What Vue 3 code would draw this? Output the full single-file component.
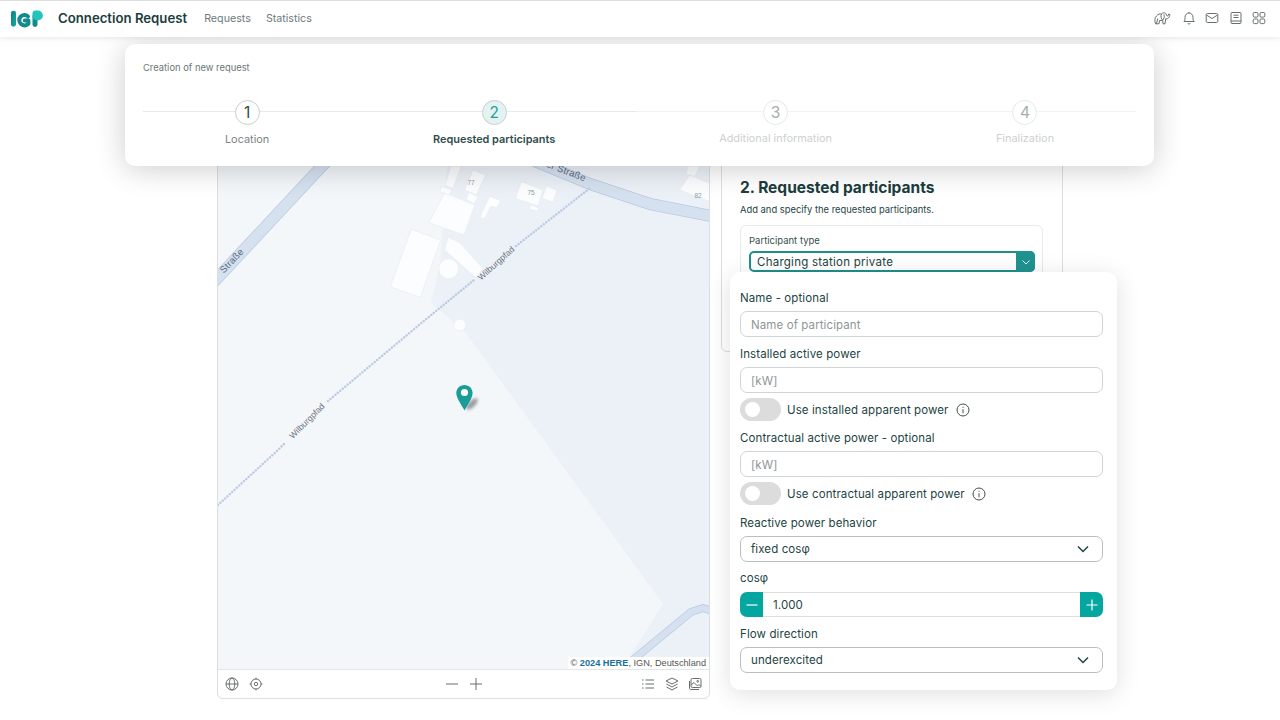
<script setup>
const steps = [
  { n: 1, label: 'Location', state: 'done' },
  { n: 2, label: 'Requested participants', state: 'active' },
  { n: 3, label: 'Additional information', state: 'todo' },
  { n: 4, label: 'Finalization', state: 'todo' }
]
const buildings = [
  '411.3,229.3 440.7,240 420.3,297.3 390.3,286.7',
  '448,237 459.7,242.7 483,268.3 476.3,278.3 444.7,250',
  '444.7,192.7 474.7,205 464,235 428.7,222.7',
  '451,166 461.3,166 453,188.3 444.7,185',
  '473,170 485.7,175 476.3,195 464.7,190',
  '441,186 452,190 449,195 440,192',
  '469,192 478,197 474,204 466,199',
  '489.7,196 500.7,200.7 497,208 491,206 484.7,219 480,217',
  '521.3,181.7 543,190 538,206 515.7,198.3',
  '546.3,186 557,190 553,202.3 542,198.3',
  '531,205 539,208 537,211 529,209',
  '689.7,175 710,183.3 710,201.7 679.7,190',
  '688,166 699.7,166 694.7,176.7 686,174'
]
</script>

<template>
  <div class="page">
    <header class="topbar">
      <svg class="logo" viewBox="0 0 32 18" width="32" height="18" aria-label="logo">
        <defs>
          <linearGradient id="lg" x1="0" y1="0" x2="1" y2="1">
            <stop offset="0" stop-color="#0f7f80" />
            <stop offset="1" stop-color="#16a8a4" />
          </linearGradient>
        </defs>
        <rect x="0" y="0.7" width="5" height="16" rx="2.4" fill="url(#lg)" />
        <path d="M17 6.4 A5.2 5.2 0 1 0 17.4 13.6 L17.4 10.6 L13.8 10.6" fill="none" stroke="#118c8b" stroke-width="4" stroke-linecap="round" stroke-linejoin="round" />
        <rect x="21.5" y="4" width="5" height="13" rx="2.4" fill="#118c8b" />
        <circle cx="26.8" cy="5.5" r="5.1" fill="#22c4bd" />
        <rect x="21.5" y="0.4" width="6" height="9" rx="3" fill="#22c4bd" />
      </svg>
      <span class="app-title">Connection Request</span>
      <nav class="nav">
        <a>Requests</a>
        <a>Statistics</a>
      </nav>
      <div class="top-icons">
        <svg viewBox="0 0 18 14" width="18" height="14" class="ic">
          <path d="M2.5 12.8 C1.5 10 1.5 6.5 3.5 5 C5 3.2 7 2.5 8.5 3 C10 1.2 13 1.5 13.5 4 C14 5.5 15 5.5 15.7 3 L16.9 3.5 C16.5 6.5 14.5 8.5 12.7 7.8 L12 12.8 L10 12.8 L9.7 9.5 L6.5 9.5 L6 12.8 Z" />
          <path d="M8.5 3 C7.5 5 8 8 9.7 9 C11 8 11.7 6 11 3.5 M4.8 7.5 L3.4 12.8" />
        </svg>
        <svg viewBox="0 0 14 14" width="14" height="14" class="ic">
          <path d="M2 10.5 C3 9.5 3 8.5 3 6.5 C3 3.8 4.8 2 7 2 C9.2 2 11 3.8 11 6.5 C11 8.5 11 9.5 12.2 10.5 Z M5.6 12.4 C6.2 13.1 7.8 13.1 8.4 12.4 M7 1 L7 2" />
        </svg>
        <svg viewBox="0 0 14 14" width="14" height="14" class="ic">
          <rect x="1.2" y="2.5" width="11.6" height="9" rx="1.2" />
          <path d="M1.5 4 L7 7.6 L12.5 4" />
        </svg>
        <svg viewBox="0 0 14 14" width="14" height="14" class="ic">
          <rect x="2" y="1.5" width="10" height="11" rx="1" />
          <path d="M4.5 4.2 H9.5 M4.5 6.5 H9.5 M2 10 H12" />
        </svg>
        <svg viewBox="0 0 14 14" width="14" height="14" class="ic">
          <rect x="1.2" y="1.5" width="4.8" height="4.6" rx="1.2" />
          <rect x="8" y="1.5" width="4.8" height="4.6" rx="1.2" />
          <rect x="1.2" y="8" width="4.8" height="4.6" rx="1.2" />
          <rect x="8" y="8" width="4.8" height="4.6" rx="1.2" />
        </svg>
      </div>
    </header>

    <main class="workspace">
      <section class="map-card">
        <div class="map">
          <svg class="tiles" viewBox="218 100 491 569" width="491" height="569">
            <rect x="218" y="100" width="492" height="569" fill="#f3f7fa" />
            <polygon points="431,303 440,262 452,100 710,100 710,669 622,669 663,604 465,332" fill="#ecf1f8" />
            <g fill="none" stroke-linejoin="round">
              <path d="M212,284 L322,166 L340,148" stroke="#b9c9e2" stroke-width="12" />
              <path d="M212,284 L322,166 L340,148" stroke="#d6e1f0" stroke-width="10.5" />
              <path d="M520,155 L590,184 L650,204 L716,217" stroke="#b9c9e2" stroke-width="12" />
              <path d="M520,155 L590,184 L650,204 L716,217" stroke="#d6e1f0" stroke-width="10.5" />
              <path d="M628,664 L691,612 L703,608 L716,612" stroke="#b9c9e2" stroke-width="8" />
              <path d="M628,664 L691,612 L703,608 L716,612" stroke="#d6e1f0" stroke-width="6.5" />
              <path d="M218,505 L278,450 L286,442 M328,401 L425,320 L474,280 M516,246 L590,188" stroke="#bccae2" stroke-width="2.4" stroke-dasharray="0.1 3.1" stroke-linecap="round" />
            </g>
            <g fill="#fcfdfe" stroke="#e6ecf1" stroke-width="0.7">
              <polygon v-for="b in buildings" :key="b" :points="b" />
              <circle cx="448.7" cy="268.7" r="10" />
              <circle cx="459.7" cy="325" r="6" />
            </g>
            <g class="road-label">
              <text transform="translate(234 263) rotate(-46)" text-anchor="middle">Straße</text>
              <text transform="translate(565 174) rotate(21)" text-anchor="middle">er Straße</text>
            </g>
            <g class="path-label">
              <text transform="translate(309 423) rotate(-45)" text-anchor="middle">Wilburgpfad</text>
              <text transform="translate(498 265.5) rotate(-42)" text-anchor="middle">Wilburgpfad</text>
            </g>
            <g class="house-no">
              <text x="471" y="185" text-anchor="middle">77</text>
              <text x="531" y="195" text-anchor="middle">75</text>
              <text x="698" y="198" text-anchor="middle">82</text>
            </g>
            <ellipse cx="472" cy="404" rx="7.5" ry="3.2" transform="rotate(-45 472 404)" fill="#444" opacity=".5" filter="blur(1.5px)" />
            <path d="M464.5 385 C460 385 456.3 388.6 456.3 393 C456.3 398 461.5 405 464.5 410.5 C467.5 405 472.6 398 472.6 393 C472.6 388.6 469 385 464.5 385 Z" fill="#1a9c98" />
            <circle cx="464.5" cy="392.5" r="3.6" fill="#fff" />
          </svg>
          <div class="attribution">© <b>2024 HERE</b>, IGN, Deutschland</div>
        </div>
        <div class="map-tools">
          <div class="tool-group">
            <svg viewBox="0 0 14 14" width="14" height="14" class="ic">
              <circle cx="7" cy="7" r="6" />
              <ellipse cx="7" cy="7" rx="2.8" ry="6" />
              <path d="M1 7 H13" />
            </svg>
            <svg viewBox="0 0 14 14" width="14" height="14" class="ic">
              <circle cx="7" cy="7" r="5" />
              <circle cx="7" cy="7" r="1.7" />
              <path d="M7 .5 V2 M7 12 V13.5 M.5 7 H2 M12 7 H13.5" />
            </svg>
          </div>
          <div class="tool-group zoom">
            <svg viewBox="0 0 14 14" width="14" height="14" class="ic"><path d="M1 7 H13" /></svg>
            <svg viewBox="0 0 14 14" width="14" height="14" class="ic"><path d="M1 7 H13 M7 1 V13" /></svg>
          </div>
          <div class="tool-group end">
            <svg viewBox="0 0 14 14" width="14" height="14" class="ic">
              <path d="M1 3 H2.5 M4.5 3 H13 M1 7 H2.5 M4.5 7 H13 M1 11 H2.5 M4.5 11 H13" />
            </svg>
            <svg viewBox="0 0 14 14" width="14" height="14" class="ic">
              <path d="M7 1 L13 4 L7 7 L1 4 Z M1.5 7 L7 10 L12.5 7 M1.5 10 L7 13 L12.5 10" />
            </svg>
            <svg viewBox="0 0 14 14" width="14" height="14" class="ic">
              <rect x="3" y="1.5" width="10" height="9" rx="1.3" />
              <path d="M1.5 4 V11 C1.5 12 2 12.5 3 12.5 H11 M3 8 L6 5.5 L9.5 9 L11 7.5 L13 9.5" />
              <circle cx="9.7" cy="4.3" r=".9" />
            </svg>
          </div>
        </div>
      </section>

      <aside class="side-panel">
        <h2>2. Requested participants</h2>
        <p class="sub">Add and specify the requested participants.</p>
        <div class="type-card">
          <div class="type-label">Participant type</div>
          <div class="type-select">
            <span>Charging station private</span>
            <i class="type-btn">
              <svg viewBox="0 0 10 10" width="10" height="10"><path d="M1.5 3.5 L5 7 L8.5 3.5" fill="none" stroke="#dff" stroke-width="1" /></svg>
            </i>
          </div>
        </div>
      </aside>
    </main>

    <section class="stepper-card">
      <div class="stepper-title">Creation of new request</div>
      <div class="steps">
        <div v-for="s in steps" :key="s.n" class="step" :class="s.state">
          <span class="circle">{{ s.n }}</span>
          <span class="step-label">{{ s.label }}</span>
        </div>
      </div>
    </section>

    <section class="form-card">
      <div class="field">
        <label>Name - optional</label>
        <div class="input placeholder">Name of participant</div>
      </div>
      <div class="field">
        <label>Installed active power</label>
        <div class="input placeholder">[kW]</div>
        <div class="toggle-row">
          <span class="toggle"><i></i></span>
          <span>Use installed apparent power</span>
          <svg class="info" viewBox="0 0 14 14" width="14" height="14"><circle cx="7" cy="7" r="6" /><path d="M7 6.2 V10.2 M7 3.8 V4.8" /></svg>
        </div>
      </div>
      <div class="field">
        <label>Contractual active power - optional</label>
        <div class="input placeholder">[kW]</div>
        <div class="toggle-row">
          <span class="toggle"><i></i></span>
          <span>Use contractual apparent power</span>
          <svg class="info" viewBox="0 0 14 14" width="14" height="14"><circle cx="7" cy="7" r="6" /><path d="M7 6.2 V10.2 M7 3.8 V4.8" /></svg>
        </div>
      </div>
      <div class="field gap-11">
        <label>Reactive power behavior</label>
        <div class="input select">
          <span>fixed cosφ</span>
          <svg viewBox="0 0 12 12" width="12" height="12"><path d="M1 3.5 L6 8.5 L11 3.5" fill="none" stroke="#1f4444" stroke-width="1.5" /></svg>
        </div>
      </div>
      <div class="field gap-9">
        <label class="num-label">cosφ</label>
        <div class="number">
          <button class="num-btn left"><svg viewBox="0 0 14 14" width="14" height="14"><path d="M1.5 7 H12.5" stroke="#fff" stroke-width="1.2" /></svg></button>
          <span class="num-value">1.000</span>
          <button class="num-btn right"><svg viewBox="0 0 14 14" width="14" height="14"><path d="M1.5 7 H12.5 M7 1.5 V12.5" stroke="#fff" stroke-width="1.2" /></svg></button>
        </div>
      </div>
      <div class="field">
        <label>Flow direction</label>
        <div class="input select">
          <span>underexcited</span>
          <svg viewBox="0 0 12 12" width="12" height="12"><path d="M1 3.5 L6 8.5 L11 3.5" fill="none" stroke="#1f4444" stroke-width="1.5" /></svg>
        </div>
      </div>
    </section>
  </div>
</template>

<style>
html, body { margin: 0; background: #fff; }
</style>

<style scoped>
.page {
  position: relative;
  width: 1280px;
  height: 720px;
  overflow: hidden;
  background: #fff;
  font-family: Inter, "Liberation Sans", sans-serif;
  color: #1d4444;
}
.topbar {
  position: relative;
  z-index: 1;
  box-sizing: border-box;
  height: 37px;
  display: flex;
  align-items: center;
  padding: 0 14px 2px 11px;
  background: #fff;
  border-top: 1px solid #dedede;
  box-shadow: 0 1px 6px rgba(0, 0, 0, 0.1);
}
.logo { flex: none; margin-top: 1px; }
.app-title {
  margin-left: 15px;
  font-size: 13.2px;
  font-weight: 600;
  color: #1b3d3d;
}
.nav {
  display: flex;
  gap: 15px;
  margin-left: 17px;
  font-size: 10.7px;
  color: #6d7b7b;
}
.top-icons {
  margin-left: auto;
  display: flex;
  align-items: center;
  gap: 9.5px;
}
.top-icons svg:first-child { margin-right: 1px; }
.ic {
  fill: none;
  stroke: #666e6e;
  stroke-width: 1;
  flex: none;
}
.workspace {
  display: flex;
  justify-content: center;
  gap: 11px;
  padding: 62px 0 0 0;
  align-items: flex-start;
}
.map-card {
  box-sizing: border-box;
  width: 493px;
  height: 600px;
  border: 1px solid #dcdfe0;
  border-radius: 6px;
  background: #fff;
  overflow: hidden;
  display: flex;
  flex-direction: column;
}
.map {
  position: relative;
  height: 569px;
  flex: none;
  border-bottom: 1px solid #e4e6e8;
}
.tiles { display: block; }
.road-label text { font: 9.5px "Liberation Sans", sans-serif; fill: #5a6a80; letter-spacing: .2px; }
.path-label text { font: 8.6px "Liberation Sans", sans-serif; fill: #6f7680; }
.house-no text { font: 6.5px "Liberation Sans", sans-serif; fill: #8aa0a8; }
.attribution {
  position: absolute;
  right: 0;
  bottom: 0;
  padding: 1px 3px 1px 3px;
  background: #fff;
  font: 9.2px "Liberation Sans", sans-serif;
  color: #555;
}
.attribution b { color: #1a6f9c; }
.map-tools {
  flex: 1;
  display: flex;
  align-items: center;
  padding: 0 7px;
}
.tool-group { flex: 1; display: flex; gap: 10px; }
.tool-group.zoom { justify-content: center; margin-left: 1px; }
.tool-group.end { justify-content: flex-end; gap: 9.5px; }
.side-panel {
  box-sizing: border-box;
  width: 342px;
  height: 253px;
  border: 1px solid #dcdfe0;
  border-radius: 6px;
  padding: 78px 19px 0 18px;
  background: #fff;
}
.side-panel h2 {
  margin: 0;
  font-size: 15.5px;
  line-height: 20px;
  font-weight: 700;
  color: #1b3d3d;
}
.sub {
  margin: 6px 0 0;
  font-size: 9.4px;
  line-height: 12px;
  color: #1d4444;
}
.type-card {
  margin-top: 9px;
  box-sizing: border-box;
  height: 100px;
  border: 1px solid #e8eaea;
  border-radius: 6px;
  padding: 9px 7px 9px 8px;
}
.type-label { font-size: 9.5px; line-height: 12px; color: #36504f; }
.type-select {
  margin-top: 4px;
  box-sizing: border-box;
  height: 21px;
  border: 2px solid #1f8f8c;
  border-radius: 5px;
  display: flex;
  align-items: center;
  justify-content: space-between;
  padding-left: 6px;
  font-size: 11.5px;
  letter-spacing: .25px;
}
.type-btn {
  width: 19px;
  height: 21px;
  margin-right: -2px;
  border-radius: 0 5px 5px 0;
  background: #1f9390;
  display: flex;
  align-items: center;
  justify-content: center;
}
.stepper-card {
  position: absolute;
  left: 125px;
  top: 44px;
  box-sizing: border-box;
  width: 1029px;
  height: 122px;
  background: #fff;
  border-radius: 10px;
  padding: 18px 18px 0;
  box-shadow: 0 3px 30px rgba(0, 0, 0, 0.2);
}
.stepper-title { font-size: 9.4px; line-height: 12px; color: #6b7777; }
.steps {
  display: flex;
  margin-top: 26px;
}
.step {
  flex: 1 1 auto;
  position: relative;
  display: flex;
  flex-direction: column;
  align-items: center;
  gap: 8px;
}
.step::before {
  content: "";
  position: absolute;
  left: 0;
  right: 0;
  top: 11px;
  height: 1px;
  background: #e8eaea;
}
.step.todo::before { background: #f2f3f3; }
.circle {
  position: relative;
  box-sizing: border-box;
  width: 25px;
  height: 25px;
  padding-bottom: 1px;
  border-radius: 50%;
  border: 1px solid #c9d0d0;
  background: #fff;
  display: flex;
  align-items: center;
  justify-content: center;
  font-size: 15.5px;
  color: #2f4c4c;
}
.step-label { font-size: 10.9px; line-height: 13px; color: #7b8585; white-space: nowrap; }
.active .circle { background: #e2f3f1; color: #2a9d98; }
.active .step-label { font-weight: 600; color: #304d4d; }
.todo .circle { border-color: #e6e8e8; color: #a5adad; }
.todo .step-label { color: #cdd1d1; margin-top: -1px; }
.form-card {
  position: absolute;
  left: 730px;
  top: 272px;
  box-sizing: border-box;
  width: 387px;
  height: 418px;
  padding: 19px 14px 0 10px;
  background: #fff;
  border-radius: 10px;
  box-shadow: 0 4px 24px rgba(0, 0, 0, 0.13);
  display: flex;
  flex-direction: column;
  gap: 10px;
  font-size: 11.5px;
  letter-spacing: .1px;
}
.field { display: flex; flex-direction: column; }
.gap-11 { margin-top: 1px; }
.gap-9 { margin-top: -1px; }
.field label {
  line-height: 14px;
  margin-bottom: 6px;
}
.field .num-label { margin-bottom: 7px; }
.input {
  box-sizing: border-box;
  height: 26px;
  border: 1px solid #cfd4d4;
  border-radius: 7px;
  padding: 0 10px;
  display: flex;
  align-items: center;
  justify-content: space-between;
}
.placeholder { color: #8f9696; padding-top: 1px; }
.select { border-color: #b9bfbf; }
.select svg { margin-right: 3px; }
.toggle-row {
  display: flex;
  align-items: center;
  margin-top: 5px;
  height: 23px;
}
.toggle {
  box-sizing: border-box;
  width: 41px;
  height: 23px;
  border-radius: 12px;
  background: #dcdcdc;
  padding: 4px 5px;
  margin-right: 6px;
}
.toggle i {
  display: block;
  width: 15px;
  height: 15px;
  border-radius: 50%;
  background: #fff;
}
.info {
  margin-left: 7px;
  fill: none;
  stroke: #444e4e;
  stroke-width: 1;
}
.number {
  height: 25px;
  display: flex;
  align-items: stretch;
}
.num-btn {
  width: 23px;
  border: 0;
  padding: 0;
  background: #04a7a0;
  display: flex;
  align-items: center;
  justify-content: center;
}
.num-btn.left { border-radius: 7px 0 0 7px; }
.num-btn.right { border-radius: 0 7px 7px 0; }
.num-value {
  flex: 1;
  display: flex;
  align-items: center;
  padding-left: 10px;
  border-top: 1px solid #dcdfdf;
  border-bottom: 1px solid #dcdfdf;
}
</style>
